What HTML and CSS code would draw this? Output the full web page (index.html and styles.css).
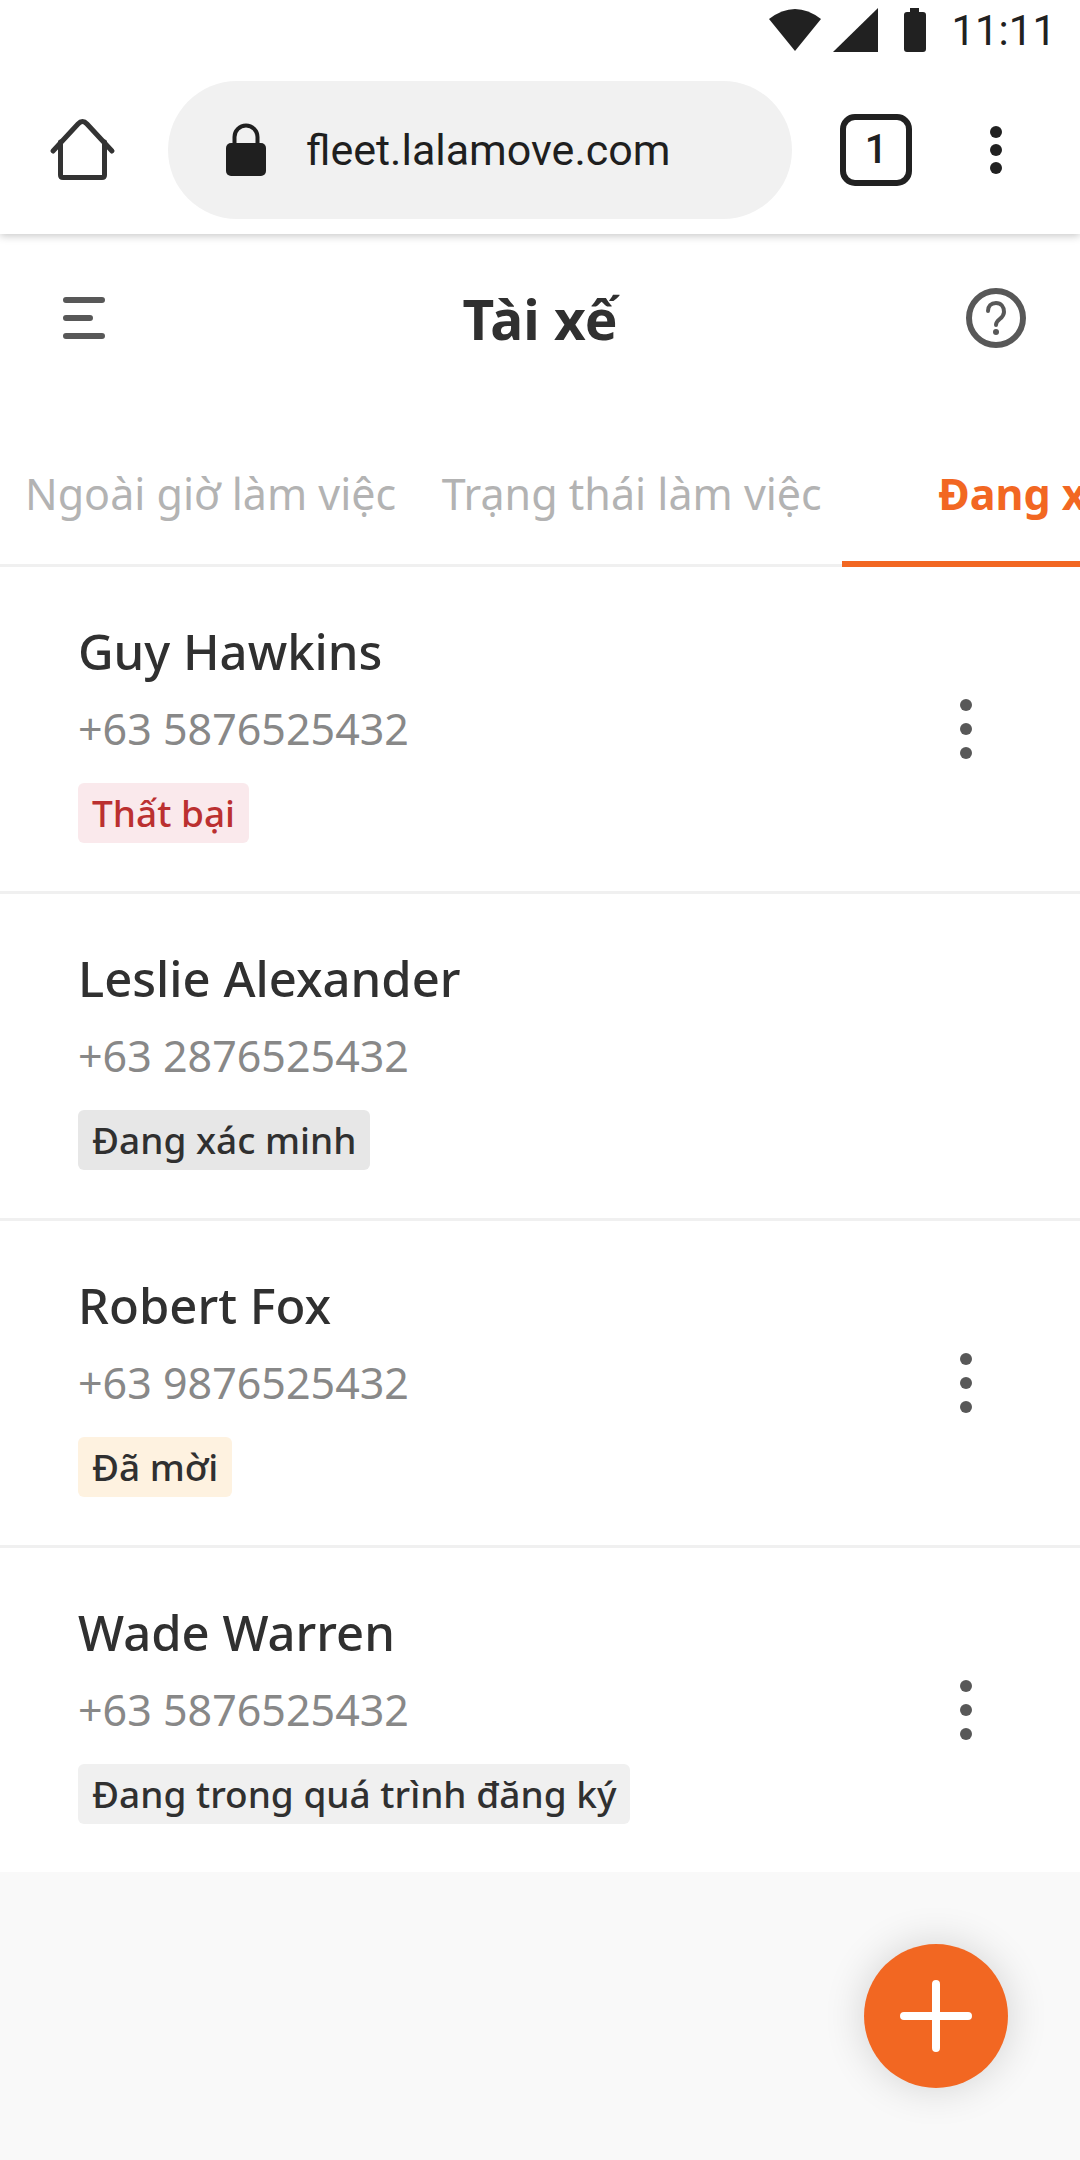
FILE: index.html
```html
<!DOCTYPE html>
<html lang="vi">
<head>
    <meta charset="UTF-8">
    <meta name="viewport" content="width=device-width, initial-scale=1.0">
    <title>Tài xế</title>
    <link rel="stylesheet" href="styles.css">
</head>
<body>
    <header class="browser">
        <div class="status-bar">
            <svg class="status-icon" viewBox="0 0 60 60"><path d="M4 19Q30 -1 56 19L30 51Z"/></svg>
            <svg class="status-icon" viewBox="0 0 60 60"><path d="M8 52L53 8V52Z"/></svg>
            <svg class="status-icon" viewBox="0 0 60 60"><path d="M25 8h9v4h4q3 0 3 3v34q0 3-3 3H22q-3 0-3-3V15q0-3 3-3h3z"/></svg>
            <time class="clock">11:11</time>
        </div>
        <div class="address-bar">
            <button class="icon-button" aria-label="Home">
                <svg viewBox="0 0 72 72" class="line home">
                    <path d="M5 37L30 10Q34.500 5 39 10L64 37"/>
                    <path d="M12.500 28V61q0 2.500 2.500 2.500H54q2.500 0 2.500-2.500V28"/>
                </svg>
            </button>
            <label class="url">
                <svg viewBox="0 0 40 54" class="lock">
                    <path d="M8.500 24V14a11.500 11.500 0 0 1 23 0V24" fill="none" stroke="#1f1f1f" stroke-width="4"/>
                    <rect y="20" width="40" height="33" rx="5"/>
                </svg>
                <input type="text" value="fleet.lalamove.com" aria-label="Address">
            </label>
            <button class="tab-count" aria-label="Open tabs">1</button>
            <button class="icon-button" aria-label="Browser menu">
                <svg viewBox="0 0 72 72" class="dark"><circle cx="36" cy="18" r="6"/><circle cx="36" cy="36" r="6"/><circle cx="36" cy="54" r="6"/></svg>
            </button>
        </div>
    </header>

    <main>
        <div class="app-bar">
            <button class="icon-button" aria-label="Menu">
                <svg viewBox="0 0 72 72" class="line"><path d="M18 18H54M18 36H42M18 54H54"/></svg>
            </button>
            <h1>Tài xế</h1>
            <button class="icon-button" aria-label="Help">
                <svg viewBox="0 0 72 72" class="line">
                    <circle cx="36" cy="36" r="27"/>
                    <path d="M28 29C28 24 31 21 36 21S44 25 44 30C44 37 36 37 36 43" stroke-width="4"/>
                    <circle cx="36" cy="50" r="3" fill="#585858" stroke="none"/>
                </svg>
            </button>
        </div>

        <nav class="tabs">
            <button class="tab">Ngoài giờ làm việc</button>
            <button class="tab">Trạng thái làm việc</button>
            <button class="tab active">Đang xử lý</button>
        </nav>

        <ul class="drivers">
            <li class="driver">
                <div class="info">
                    <h2>Guy Hawkins</h2>
                    <p class="phone">+63 5876525432</p>
                    <span class="tag failed">Thất bại</span>
                </div>
                <button class="icon-button" aria-label="Guy Hawkins options">
                    <svg viewBox="0 0 72 72"><circle cx="36" cy="12" r="6"/><circle cx="36" cy="36" r="6"/><circle cx="36" cy="60" r="6"/></svg>
                </button>
            </li>
            <li class="driver">
                <div class="info">
                    <h2>Leslie Alexander</h2>
                    <p class="phone">+63 2876525432</p>
                    <span class="tag verifying">Đang xác minh</span>
                </div>
            </li>
            <li class="driver">
                <div class="info">
                    <h2>Robert Fox</h2>
                    <p class="phone">+63 9876525432</p>
                    <span class="tag invited">Đã mời</span>
                </div>
                <button class="icon-button" aria-label="Robert Fox options">
                    <svg viewBox="0 0 72 72"><circle cx="36" cy="12" r="6"/><circle cx="36" cy="36" r="6"/><circle cx="36" cy="60" r="6"/></svg>
                </button>
            </li>
            <li class="driver">
                <div class="info">
                    <h2>Wade Warren</h2>
                    <p class="phone">+63 5876525432</p>
                    <span class="tag">Đang trong quá trình đăng ký</span>
                </div>
                <button class="icon-button" aria-label="Wade Warren options">
                    <svg viewBox="0 0 72 72"><circle cx="36" cy="12" r="6"/><circle cx="36" cy="36" r="6"/><circle cx="36" cy="60" r="6"/></svg>
                </button>
            </li>
        </ul>
    </main>

    <button class="add-button" aria-label="Thêm tài xế">
        <svg viewBox="0 0 72 72"><path d="M36 4V68M4 36H68"/></svg>
    </button>
</body>
</html>
```
FILE: styles.css
```css
* {
    box-sizing: border-box;
}

body {
    margin: 0;
    background-color: #f9f9f9;
    color: #303030;
    font-family: "Noto Sans", sans-serif;
}

button {
    padding: 0;
    border: 0;
    background: none;
    color: inherit;
    font-family: inherit;
    cursor: pointer;
}

svg {
    display: block;
}

/* browser chrome */
.browser {
    position: relative;
    z-index: 1;
    background-color: #fff;
    color: #212121;
    font-family: Roboto, sans-serif;
    box-shadow: 0 2px 8px rgba(0, 0, 0, 0.22);
}

.status-bar {
    display: flex;
    align-items: center;
    justify-content: flex-end;
    height: 60px;
    padding-right: 24px;
}

.status-icon {
    width: 60px;
    height: 60px;
    fill: #212121;
}

.clock {
    margin-left: 6px;
    font-size: 42px;
}

.address-bar {
    display: flex;
    align-items: center;
    gap: 48px;
    padding: 21px 48px 15px;
}

.icon-button {
    flex: none;
    width: 72px;
    height: 72px;
    fill: #585858;
}

.dark {
    fill: #212121;
}

.line {
    fill: none;
    stroke: #585858;
    stroke-width: 6;
    stroke-linecap: round;
    stroke-linejoin: round;
}

.home {
    stroke: #333;
    stroke-width: 5;
}

.url {
    display: flex;
    flex: 1;
    align-items: center;
    gap: 40px;
    min-width: 0;
    height: 138px;
    padding: 0 58px;
    border-radius: 69px;
    background-color: #f1f1f1;
}

.url input {
    flex: 1;
    min-width: 0;
    padding: 0;
    border: 0;
    outline: 0;
    background: none;
    color: #1f1f1f;
    font-family: inherit;
    font-size: 43px;
}

.lock {
    flex: none;
    width: 40px;
    height: 54px;
    fill: #1f1f1f;
}

.tab-count {
    flex: none;
    width: 72px;
    height: 72px;
    border: 6px solid #212121;
    border-radius: 15px;
    font-size: 40px;
    font-weight: 500;
    line-height: 56px;
}

/* page */
main {
    background-color: #fff;
}

.app-bar {
    display: flex;
    align-items: center;
    justify-content: space-between;
    height: 168px;
    padding: 0 48px;
}

h1 {
    margin: 0;
    font-size: 55px;
    font-weight: 700;
}

.tabs {
    display: flex;
    height: 165px;
    padding-top: 24px;
    overflow: hidden;
    box-shadow: inset 0 -3px #f0f0f0;
}

.tab {
    flex: 0 0 39%;
    border-bottom: 6px solid transparent;
    color: #b3b3b3;
    font-size: 43px;
    white-space: nowrap;
}

.tab.active {
    border-color: #f26722;
    color: #f26722;
    font-weight: 700;
}

.drivers {
    margin: 0;
    padding: 0;
    list-style: none;
}

.driver {
    display: flex;
    align-items: center;
    justify-content: space-between;
    padding: 48px 78px;
    border-bottom: 3px solid #f0f0f0;
}

.driver:last-child {
    border-bottom: 0;
}

h2 {
    margin: 0 0 12px;
    font-size: 49px;
    font-weight: 500;
    line-height: 72px;
}

.phone {
    margin: 0 0 24px;
    color: #888;
    font-size: 43px;
    line-height: 60px;
}

.tag {
    display: block;
    width: fit-content;
    padding: 0 14px;
    border-radius: 6px;
    background-color: #f0f0f0;
    font-size: 37px;
    font-weight: 500;
    line-height: 60px;
}

.failed {
    background-color: #fae9ec;
    color: #bb3030;
}

.verifying {
    background-color: #e7e7e7;
}

.invited {
    background-color: #fef2e0;
}

.add-button {
    position: fixed;
    right: 72px;
    bottom: 72px;
    display: flex;
    align-items: center;
    justify-content: center;
    width: 144px;
    height: 144px;
    border-radius: 50%;
    background-color: #f26722;
    box-shadow: 0 0 42px rgba(0, 0, 0, 0.16);
}

.add-button svg {
    width: 72px;
    height: 72px;
    stroke: #fff;
    stroke-width: 8;
    stroke-linecap: round;
}
```
